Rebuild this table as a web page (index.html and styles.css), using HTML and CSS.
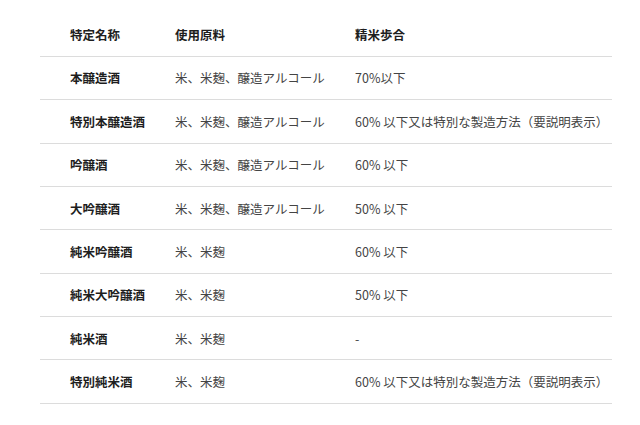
FILE: index.html
```html
<!DOCTYPE html>
<html lang="ja">
<head>
<meta charset="utf-8">
<link rel="stylesheet" href="styles.css">
</head>
<body>
<div class="table">
  <div class="row head">
    <div class="c1">特定名称</div><div class="c2">使用原料</div><div class="c3">精米歩合</div>
  </div>
  <div class="row">
    <div class="c1">本醸造酒</div><div class="c2">米、米麹、醸造アルコール</div><div class="c3">70%以下</div>
  </div>
  <div class="row">
    <div class="c1">特別本醸造酒</div><div class="c2">米、米麹、醸造アルコール</div><div class="c3">60% 以下又は特別な製造方法（要説明表示）</div>
  </div>
  <div class="row">
    <div class="c1">吟醸酒</div><div class="c2">米、米麹、醸造アルコール</div><div class="c3">60% 以下</div>
  </div>
  <div class="row">
    <div class="c1">大吟醸酒</div><div class="c2">米、米麹、醸造アルコール</div><div class="c3">50% 以下</div>
  </div>
  <div class="row">
    <div class="c1">純米吟醸酒</div><div class="c2">米、米麹</div><div class="c3">60% 以下</div>
  </div>
  <div class="row">
    <div class="c1">純米大吟醸酒</div><div class="c2">米、米麹</div><div class="c3">50% 以下</div>
  </div>
  <div class="row">
    <div class="c1">純米酒</div><div class="c2">米、米麹</div><div class="c3">-</div>
  </div>
  <div class="row">
    <div class="c1">特別純米酒</div><div class="c2">米、米麹</div><div class="c3">60% 以下又は特別な製造方法（要説明表示）</div>
  </div>
</div>
</body>
</html>
```

FILE: styles.css
```css
html, body {
  margin: 0;
  padding: 0;
  background: #ffffff;
}
body {
  font-family: "Noto Sans CJK JP", "Noto Sans", sans-serif;
  font-size: 12.5px;
  color: #444444;
  padding: 13.4px 28px 0 40px;
}
.table {
  width: 572px;
}
.row {
  display: grid;
  grid-template-columns: 105px 180px 1fr;
  align-items: center;
  padding-left: 30px;
  height: 43.375px;
  box-sizing: border-box;
  border-bottom: 1px solid #dcdcdc;
  white-space: nowrap;
}
.c1 {
  font-weight: 700;
  color: #1e1e1e;
}
.head {
  font-weight: 700;
  color: #1e1e1e;
}
```
